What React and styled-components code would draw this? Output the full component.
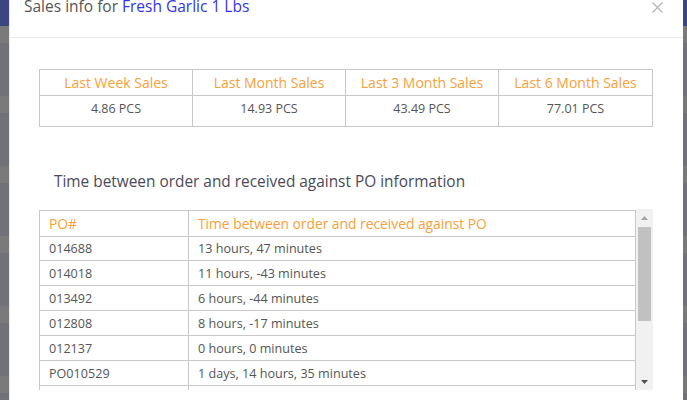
import React from "react";
import styled, { createGlobalStyle } from "styled-components";

const orange = "#f7a13a";
const textGrey = "#555555";
const line = "#c8c8c8";

const GlobalStyle = createGlobalStyle`
  html, body {
    margin: 0;
    padding: 0;
    height: 400px;
    overflow: hidden;
  }
  body {
    font-family: "Open Sans", "Liberation Sans", sans-serif;
    background:
      linear-gradient(to bottom, #3b4581 0, #3b4581 26px, transparent 26px),
      repeating-linear-gradient(to bottom, #7a7a7b 0, #7a7a7b 17px, #717277 17px, #717277 70px);
    background-position: 0 0, 0 26px;
    background-repeat: no-repeat, repeat;
  }
`;

const Modal = styled.div`
  margin-left: 10px;
  width: 673px;
  height: 400px;
  background: #ffffff;
  box-shadow: -1px 0 0 #e9e9ee;
  display: flex;
  flex-direction: column;
`;

const Header = styled.div`
  height: 38px;
  box-sizing: border-box;
  padding: 0 20px 0 14px;
  border-bottom: 1px solid #ebe9f2;
  display: flex;
  justify-content: space-between;
  align-items: flex-start;
`;

const Title = styled.div`
  font-size: 15.5px;
  line-height: 14px;
  margin-top: -1px;
  color: ${textGrey};
`;

const ProductLink = styled.span`
  color: #3434ec;
`;

const Close = styled.button`
  border: 0;
  background: none;
  padding: 0;
  margin-top: 2px;
  width: 11px;
  height: 11px;
  display: flex;
  cursor: pointer;
`;

const Body = styled.div`
  padding: 31px 30px 0 29px;
  display: flex;
  flex-direction: column;
`;

const SalesGrid = styled.div`
  display: grid;
  grid-template-columns: repeat(4, 1fr);
  border: 1px solid ${line};
`;

const SalesHead = styled.div`
  height: 26px;
  box-sizing: border-box;
  border-right: ${(p) => (p.$last ? "0" : `1px solid ${line}`)};
  border-bottom: 1px solid ${line};
  color: ${orange};
  font-size: 14px;
  display: flex;
  align-items: center;
  justify-content: center;
`;

const SalesValue = styled.div`
  height: 30px;
  box-sizing: border-box;
  padding-top: 4px;
  border-right: ${(p) => (p.$last ? "0" : `1px solid ${line}`)};
  color: ${textGrey};
  font-size: 12.5px;
  text-align: center;
  line-height: 18px;
`;

const SectionTitle = styled.h3`
  margin: 44px 0 0 15px;
  font-weight: 400;
  font-size: 15.4px;
  line-height: 22px;
  color: #4a4a58;
`;

const ScrollBox = styled.div`
  margin-top: 16px;
  height: 181px;
  display: flex;
  overflow: hidden;
`;

const PoTable = styled.div`
  flex: 1;
  margin-top: 1px;
  display: grid;
  grid-template-columns: 149px 1fr;
  grid-auto-rows: 25px;
  align-content: start;
  border-left: 1px solid ${line};
  border-top: 1px solid ${line};
  border-right: 1px solid ${line};
`;

const Cell = styled.div`
  box-sizing: border-box;
  padding-left: 9px;
  border-bottom: 1px solid ${line};
  border-right: ${(p) => (p.$first ? `1px solid ${line}` : "0")};
  display: flex;
  align-items: center;
  font-size: ${(p) => (p.$head ? "13.8px" : "12.6px")};
  color: ${(p) => (p.$head ? orange : textGrey)};
  height: ${(p) => (p.$head ? "26px" : "25px")};
  white-space: nowrap;
`;

const Scrollbar = styled.div`
  width: 17px;
  background: #f1f1f1;
  display: flex;
  flex-direction: column;
  align-items: center;
`;

const Arrow = styled.div`
  height: 17px;
  width: 17px;
  display: flex;
  align-items: center;
  justify-content: center;
`;

const Thumb = styled.div`
  margin-top: 1px;
  width: 13px;
  height: 94px;
  background: #c1c1c1;
`;

const Spacer = styled.div`
  flex: 1;
`;

const sales = [
  ["Last Week Sales", "4.86 PCS"],
  ["Last Month Sales", "14.93 PCS"],
  ["Last 3 Month Sales", "43.49 PCS"],
  ["Last 6 Month Sales", "77.01 PCS"],
];

const orders = [
  ["014688", "13 hours, 47 minutes"],
  ["014018", "11 hours, -43 minutes"],
  ["013492", "6 hours, -44 minutes"],
  ["012808", "8 hours, -17 minutes"],
  ["012137", "0 hours, 0 minutes"],
  ["PO010529", "1 days, 14 hours, 35 minutes"],
  ["PO009870", "2 days, 3 hours, 12 minutes"],
];

export default function App() {
  return (
    <>
      <GlobalStyle />
      <Modal>
        <Header>
          <Title>
            Sales info for <ProductLink>Fresh Garlic 1 Lbs</ProductLink>
          </Title>
          <Close aria-label="close">
            <svg width="11" height="11" viewBox="0 0 11 11">
              <path d="M0.5 0.5 L10.5 10.5 M10.5 0.5 L0.5 10.5" stroke="#b4b4bc" strokeWidth="1.3" />
            </svg>
          </Close>
        </Header>
        <Body>
          <SalesGrid>
            {sales.map(([label], i) => (
              <SalesHead key={label} $last={i === sales.length - 1}>{label}</SalesHead>
            ))}
            {sales.map(([label, value], i) => (
              <SalesValue key={label} $last={i === sales.length - 1}>{value}</SalesValue>
            ))}
          </SalesGrid>

          <SectionTitle>Time between order and received against PO information</SectionTitle>

          <ScrollBox>
            <PoTable>
              <Cell $head $first>PO#</Cell>
              <Cell $head>Time between order and received against PO</Cell>
              {orders.map(([po, time]) => (
                <React.Fragment key={po}>
                  <Cell $first>{po}</Cell>
                  <Cell>{time}</Cell>
                </React.Fragment>
              ))}
            </PoTable>
            <Scrollbar>
              <Arrow>
                <svg width="7" height="4" viewBox="0 0 7 4"><path d="M3.5 0 L7 4 L0 4 Z" fill="#a3a3a3" /></svg>
              </Arrow>
              <Thumb />
              <Spacer />
              <Arrow>
                <svg width="7" height="4" viewBox="0 0 7 4"><path d="M0 0 L7 0 L3.5 4 Z" fill="#505050" /></svg>
              </Arrow>
            </Scrollbar>
          </ScrollBox>
        </Body>
      </Modal>
    </>
  );
}
